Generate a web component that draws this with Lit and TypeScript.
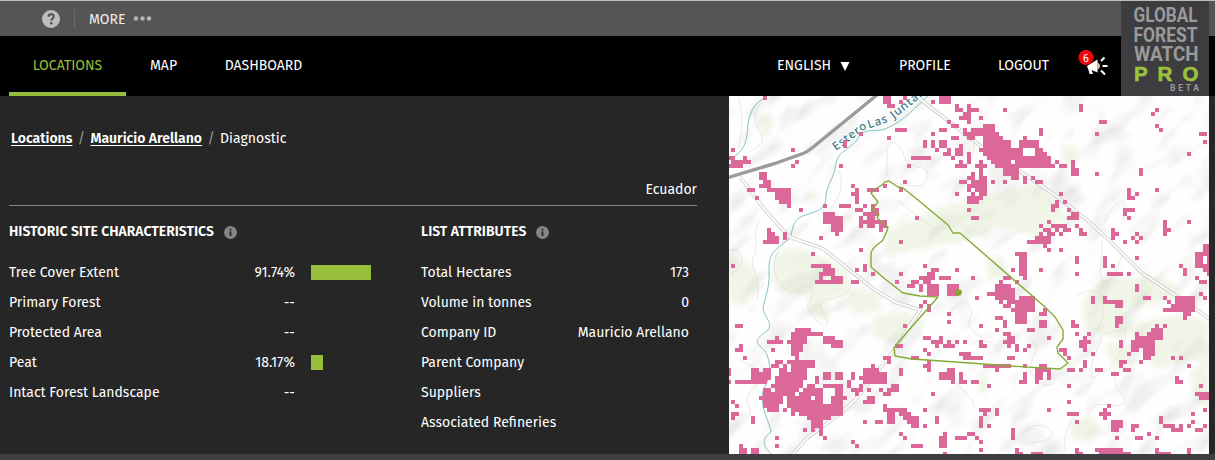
import { LitElement, html, css } from "lit";
import { customElement, property } from "lit/decorators.js";

interface Block { col: number; row: number; cells: string; }

// Loss cells: "x,y[,w[,h]]" in 4px grid units, relative to the block origin.
const BLOCKS: Block[] = [
  { col: 0, row: 0, cells: "9,0 1,13 0,15,2 4,15 1,16,5 0,17,4 16,13 17,16 16,17 28,17 29,11,1,2 33,9 39,0,2,2 40,2,2 40,10 8,19,2,2 9,21,2 8,22,3 10,23,6 12,24,4,2 13,26,3 15,27 5,23,2 7,25 18,28 24,27 31,22 32,23 31,24,2 32,25,1,2 28,27,3 35,23,3 39,22 34,27 36,27 32,28,2 36,28,2 34,29 36,29,2 35,30,2 24,29,3,3 26,30,3,4 27,34" },
  { col: 0, row: 29, cells: "10,4,1,3 9,7,4 12,6 11,5,1,2 14,5,1,2 23,6 21,10 1,13 21,13,5 24,14,3 23,15,4 23,16 26,16,3 22,17,7 33,9 34,13,1,2 32,14 36,15 31,17,2 32,-1,2 33,1,1,3 35,0,2 36,1 34,2,6 35,3,2 38,3,2 38,4 2,28,2 12,31 17,29,4 16,30,5" },
  { col: 40, row: 0, cells: "4,0 3,1 11,1 13,0,3,2 17,2 17,3,2 20,2,1,5 21,3,2 19,4 18,5,2 23,5 29,3 15,6 16,7,2 2,8,3 11,9 13,8,2 0,10 9,11,1,2 11,11,1,2 13,11,2,2 12,13 15,13,1,2 14,14 16,10,2 17,13,2,2 18,12 16,15 6,15,5 5,17 19,8 24,7,3 21,8,6 19,9,9 20,10,2 24,10,5 24,11,7,2 23,13,11 24,14,10 25,15,16 26,16,5 32,16,9 27,17,15 29,18,4,2 31,20,2 34,10 33,11,5,2 37,13,2 37,14,3 38,8,1,2 34,20,1,2 36,20 37,21,2 29,21 26,21 20,14,1,3 18,16 17,17,3 23,16,1,4 22,17,3 21,19 20,20,2 23,20,2 18,21,2 21,21,4 20,22,5 20,23 22,23,3 21,24 23,24,2 20,25,4 20,26,3 20,28 21,30,2 17,24 4,21 3,23 -1,22 7,30 41,27,1,2" },
  { col: 80, row: 0, cells: "8,2,1,2 13,6,2 12,9 26,4 27,3 27,7 28,8 38,9,2 39,11 35,14 -1,14 -1,15,2,3 1,17 2,16 3,17,2 6,16,1,4 7,18,1,2 12,19 23,18,1,2 27,23 20,23,1,3 21,25 22,24 19,28,3 19,29 20,30 3,24 4,26 2,26,1,2 1,27,1,2 5,28 6,29,2,2" },
  { col: 40, row: 29, cells: "20,-1 21,1,2 7,1 3,7 9,13 3,15 2,17 11,14,2 10,15,2 8,16,4 6,17,2 9,17,2 5,18,2 8,18,1,2 10,18,3,3 13,16,3 17,14 21,16 15,18,3,3 22,21 9,22 8,23 10,23,1,2 15,25 15,27 4,28 23,28 9,31,2 13,31 35,7,6 37,6,3 38,5 38,3 39,4 40,2 40,5 39,8 40,9 32,10,3 33,11,2,4 34,15,1,2 33,15 31,14 38,14 29,16,2 32,17 28,17 27,18,4 27,19,5 25,20,7 27,21,5 33,21,4 28,22 30,22,7 29,23,2 32,23,5 31,24,6 32,25,3,3 39,24 38,25,2 38,27,2,2 35,29,2 27,26,2 29,27,1,2 27,29 29,30,2 30,31,2" },
  { col: 80, row: 29, cells: "6,0,2,2 5,1 0,2 1,3,4 7,3 -1,4,2 2,4 4,4,2 1,5 3,5 5,4 8,5,2 8,4 -1,6,2 0,7 0,9 3,9 7,11,1,2 7,15 14,11,1,3 16,13 15,15,4 20,15 22,11 22,18,1,2 24,21,2 16,4,1,3 17,5 19,7 21,6 22,5 23,6 22,7 20,1 29,2,1,4 30,4 35,2 39,8,2 39,9,2 37,10,4 37,11,2,2 40,11,1,2 37,13,4 39,14,2 40,15 33,13 34,14,1,2 37,16 38,17,2 38,20 39,21 11,21,1,2 14,21 14,22,5 17,23,2 17,26,2,2 17,28 6,27,1,2 7,28 7,30 10,30 9,31 -1,27,1,2 29,21 30,22 32,21,5,2 31,23,6 29,24,8 34,25,2 34,26 27,28 29,28 26,29,3 25,30,4 22,31,7 22,30" },
  { col: 0, row: 59, cells: "16,0,8 12,1 16,1,4 24,1,3 10,2,4 15,2,5 24,2,5 16,3,3 26,3,3 11,4 16,4,3 16,5,2 17,6 12,7,2 15,7,7 11,8,2 14,8 16,8,6 6,9,2 9,9,2 13,9,2 16,9,4 6,10,5 13,10,7 6,11,5 12,11,8 2,12,8 12,12,7 11,13,8 20,13,2 9,14,2 12,14,6 19,14,5 9,15,8 18,15,6 8,16,6 15,16,6 22,16,2 9,17,5 15,17,9 9,18,4 15,18,14 10,19,3 14,19 16,19,13 16,20 18,20,11 20,21,6 21,22,3,2 21,24 23,24,1,2 24,26 19,24 24,13,5 27,14,2,2 26,16,3,2 24,10,2,2 27,10,2,2 22,11,1,2 31,10,1,2 30,12,1,2 33,13 31,14,3 32,15 29,16 36,8 34,9,4 34,10,6,3 33,11 39,6,2 40,7 35,14 38,14 41,13,2 40,14,3 39,15,2 35,16,2 34,17,3 43,9,1,2 42,3,2 46,6,2 49,1,2 51,2,3 53,1 54,3,3 55,2 57,2 49,4 50,5 52,3 50,7,1,3 49,8 55,9,2 53,10,4,2 56,12 58,10,1,3 59,12 58,5,3 59,6,2 59,2 51,15 39,18 39,19,6 40,20,2,3 43,20,3 44,21,4 45,22,3 46,23,2 49,19 52,21,1,2 49,23 37,22,2 34,22 43,25 44,26 46,28,3 54,25,1,4 53,26,1,3 57,26,3 60,25 54,30 31,27 32,28 12,26 12,28 2,4,2 3,3 4,6 0,9,1,2 0,12 1,17 2,18 1,20,2 1,21 6,21,1,2 3,28 3,29,2 6,29,2,2 3,30,2" },
  { col: 61, row: 59, cells: "2,2,1,2 3,3 8,0,2 9,1,2,2 8,2 9,3 11,3,1,2 14,3 13,4 19,1 0,6,3 3,8,7 9,6,2 6,9 13,8 0,12,2 4,13 13,10,1,3 12,12 16,9,3 16,10,2,2 16,12 17,8,2 19,9,1,3 26,0 29,0 28,1 27,2,2,2 28,4 29,2 30,5 22,4,2 23,5 24,6 28,7,1,2 27,9 24,9,2 31,9,2 24,13 24,17 24,20,3 26,22 19,19 37,2,1,2 39,5 41,0 44,0,4 45,-1,3 41,1,7 40,2,6,2 40,4,2 43,4,3,2 43,6,2 42,7 37,7,2 37,8 38,9,2 35,10,2 50,6 52,6 54,8 51,11,1,2 52,12 57,13 56,15,4 57,16,3 58,19 55,20 55,22 54,23 58,23 56,24,2 2,19,3 3,20 6,19,1,2 2,21,1,3 4,23 10,24,1,3 0,25 1,26 2,27 2,29 11,29 11,30,2 15,30,3 26,29 26,30,2 34,18 33,19,1,3 32,20,3 35,22,3,2 35,24,2 40,23,2 40,24 47,21,1,2 48,23,3 50,24,3 52,23 36,26 41,26,2 44,25 46,26 31,29,7 32,30,8 46,29 46,30,4 54,29,1,2" },
];

const cellPath = BLOCKS.map((b) =>
  b.cells.split(" ").map((c) => {
    const [x, y, w = 1, h = 1] = c.split(",").map(Number);
    return `M${727 + (b.col + x) * 4} ${96 + (b.row + y) * 4}h${w * 4}v${h * 4}h${-w * 4}z`;
  }).join("")
).join("");

const ROAD_A = "M740 177 L765 210 L788 236 C800 242 814 244 825 250 L852 272 L875 290 L895 302 L920 310 L892 353 L860 394 C850 407 835 418 822 427 L806 439 L792 455";
const ROAD_B = "M916 96 L982 147 L1018 170 L1055 195 L1087 220 L1112 243 L1142 273 L1178 297 L1210 319";
const SITE = "M889 181L898 187L903 188L918 200L930 210L942 220L948 225L953 233L960 233L1045 307L1055 317L1063 330L1063 339L1057 347L1058 353L1068 363L1060 369L1010 366L970 363L912 359L895 356L894 348L902 338L938 297L920 296L903 293L885 279L871 267L871 253C873 246 879 244 883 240L887 231L888 227L877 218L879 214L872 210L878 202L871 193L877 188L882 185L885 182Z";

@customElement("forest-map")
class ForestMap extends LitElement {
  static styles = css`
    :host { display: block; background: #fefefe; overflow: hidden; }
    svg { display: block; }
    .water { fill: none; stroke: #86c2c0; stroke-width: 1; }
    .contour { fill: none; stroke: #d9cfc6; stroke-width: 0.8; opacity: 0.6; }
    .case { fill: none; stroke: #cacac8; stroke-width: 3.6; }
    .road { fill: none; stroke: #fcfcfc; stroke-width: 2.1; }
    .highway { fill: none; stroke: #9b9b9b; stroke-width: 3.4; }
    .veg { fill: #f1f5e7; }
    .cells { fill: #dc6899; shape-rendering: crispEdges; }
    .site { fill: none; stroke: #84ab36; stroke-width: 1.4; stroke-linejoin: round; }
    .pin { fill: #7fa82d; }
    .label { font: 500 11.5px "Noto Sans", sans-serif; fill: #3c7884; letter-spacing: 0.9px; stroke: #fff; stroke-width: 2px; paint-order: stroke; }
  `;
  render() {
    return html`<svg width="480" height="358" viewBox="729 96 480 358">
      <defs>
        <filter id="relief" x="0" y="0" width="1" height="1" color-interpolation-filters="sRGB">
          <feTurbulence type="fractalNoise" baseFrequency="0.027 0.055" numOctaves="2" seed="11"></feTurbulence>
          <feColorMatrix values="0 0 0 0 .5  0 0 0 0 .5  0 0 0 0 .49  .45 0 0 0 -.222"></feColorMatrix>
        </filter>
        <filter id="soft"><feGaussianBlur stdDeviation="2.5"></feGaussianBlur></filter>
      </defs>
      <g class="veg" filter="url(#soft)">
        <path d="M757 120l8-7 9 6-4 15-6 5z M806 190l8-1 3 8-7 6-4-3z"></path>
        <path d="M729 258h12l14 10 2 20-10 16-18-1z"></path>
        <path d="M787 247l22 5 28 12 13 12-2 18-22 6 4 22-18-6-6-20-26-4-10-14 4-20z"></path>
        <path d="M850 290l28 0 3 22-30 2z M872 318l30-8 20 12-22 22-26-6z"></path>
        <path d="M885 232l52-24 60-14 40-14 20 24 8 14-28 18-38-8-40 14-44 8-30 8z"></path>
        <path d="M985 260l16-4 8 16-20 10z M1060 145l18 2-2 16-10 6z"></path>
        <path d="M1100 280l60-4 22 14-8 12-50 6 12 22-16 10-34-10-4-28z M1128 325l50-10 31 6v40l-24 0-30 8z"></path>
        <path d="M1072 420l20-4 10 16-14 12-18-8z M1190 370l19-10v50l-15-10z M1105 345l24-3 6 20-20 8z M980 375l8 0-2 20-8-4z"></path>
      </g>
      <g transform="rotate(-42 969 275)"><rect x="649" y="-35" width="640" height="620" filter="url(#relief)"></rect></g>
      <g class="contour">
        <path d="M739 98c4 20 3 30 0 50 M765 98c-12 14-12 20-5 34s-2 12-10 20 M839 170c8 26-6 30-18 56 M795 228c-20 20-26 40-16 54s18 10 24 4c12-4 12 12 4 20 10 22 24 24 20 14-6-12-12-20 2-21 16-2 24-8 22-20"></path>
        <path d="M887 148c4-10 12-5 16 4 2 12 8 14 20 16 10 4 4 20-10 18s-28-2-26-18z M950 315c6-18 20-16 22-2-6 12-2 18 10 24 M1105 222c6-14 16-26 20-18l-2 18 M1102 240c0 30-6 42 6 41 10-6 10-18 16-30 M1078 295c10-6 22-6 24 2 4 22-4 36-14 44"></path>
        <path d="M730 250c16-4 16 20 0 23 M760 220c-10 16 0 26-6 36s8 20 3 44 M740 360c20 10 30 14 12 30-12 12 4 16-4 28 M1115 375c-2 20 12 18 10 28-12 8-30-8-36 12 M1065 450c-2-16 4-26 12-38 M1026 432c6-12 26-6 26 2s-20 8-22 10 M1092 378c-4-20 8-26 10-44l22-4c6 8-8 30-14 38z M1030 370c6 16 24 20 26 8"></path>
        <path d="M898 200c10 10 22 18 34 26 M968 130c10 6 8 30-6 42 M953 365c2 26 18 28 22 42 M1030 340c16 10-6 20 4 30 M970 345c10-8 26-4 30 8"></path>
      </g>
      <g class="water">
        <path d="M766 97C754 103 750 112 748 124C747 140 746 148 734 157"></path>
        <path d="M928 96C914 108 906 120 885 129C874 133 864 126 857 140C848 150 838 152 836 163C834 180 826 185 826 197C826 211 815 211 806 215C788 220 795 234 788 240C770 252 769 257 769 272C770 290 764 298 763 309C765 318 774 324 767 331C752 341 757 343 765 351C771 362 772 374 763 391C759 405 770 423 771 432C760 440 764 447 771 454"></path>
      </g>
      <path class="case" d=${ROAD_A}></path><path class="case" d=${ROAD_B}></path>
      <path class="road" d=${ROAD_A}></path><path class="road" d=${ROAD_B}></path>
      <path class="highway" d="M728 177.500L775 163.500L803 153.500Q807 152 812 148L877 95"></path>
      <g class="label">
        <text transform="translate(836 151) rotate(-37)">Estero</text>
        <text transform="translate(869 128.500) rotate(-19)">Las</text>
        <text transform="translate(894 119) rotate(-39)">Juntas</text>
      </g>
      <path class="cells" d=${cellPath}></path>
      <path class="site" d=${SITE}></path>
      <circle class="pin" cx="958.500" cy="292.500" r="3.300"></circle>
    </svg>`;
  }
}

const infoIcon = html`<svg width="13" height="13" viewBox="0 0 13 13">
  <circle cx="6.500" cy="6.500" r="6.500" fill="#858585"></circle>
  <path d="M5.600 2.800h1.800v1.700H5.600zM5.200 5.500h2.200V10H5.600V6.500h-.4z" fill="#262626"></path></svg>`;

@customElement("stat-row")
class StatRow extends LitElement {
  @property() label = "";
  @property() value = "";
  @property({ type: Number }) bar = 0;
  static styles = css`
    :host { display: flex; height: 30px; align-items: center; }
    .text { padding-top: 2px; }
    .name { flex: 1; }
    .bar { height: 15px; background: #98bf3c; }
    .track { width: 60px; margin-left: 16px; }
    :host(.plain) .track { display: none; }
  `;
  render() {
    return html`<span class="text name">${this.label}</span><span class="text">${this.value}</span>
      <span class="track">${this.bar ? html`<div class="bar" style="width:${this.bar}px"></div>` : ""}</span>`;
  }
}

@customElement("app-root")
class AppRoot extends LitElement {
  static styles = css`
    :host {
      display: flex; flex-direction: column; box-sizing: border-box; position: relative;
      width: 1215px; height: 460px; overflow: hidden; background: #3e3e40; border-top: 1px solid #b9bdbb;
      font: 14px/20px "Fira Sans", "Noto Sans", sans-serif; font-stretch: 90%; color: #fff;
    }
    svg { display: block; }
    .top { height: 35px; background: #555; display: flex; align-items: center; padding-left: 42px; }
    .sep { width: 1px; height: 18px; background: #6b6b6b; margin: 0 14px 0 14px; }
    .more { color: #eee; padding-top: 2px; }
    .dots { margin-left: 8px; }
    .nav { height: 60px; background: #000; display: flex; padding-left: 9px; }
    .tab { display: flex; align-items: center; justify-content: center; box-sizing: border-box; }
    .locations { width: 117px; color: #97bd3d; border-bottom: 4px solid #97bd3d; padding: 4px 0 0; }
    .map { width: 75px; }
    .dash { width: 125px; }
    .right { display: flex; align-items: center; margin-left: 451px; }
    .lang { width: 122px; display: flex; align-items: center; gap: 9px; }
    .profile { width: 99px; }
    .logout { width: 79px; }
    .bell { margin: -4px 0 0; }
    .logo { position: absolute; left: 1121px; top: 0; }
    .main { display: flex; height: 358px; background: #262626; }
    .panel { width: 688px; padding: 33px 32px 0 9px; }
    .crumbs { display: flex; padding-left: 2px; }
    .crumbs a { font-weight: 600; text-decoration: underline; text-underline-offset: 2px; }
    .slash { color: #999; width: 18px; text-align: center; }
    .country { margin-top: 31px; height: 25px; border-bottom: 1px solid #858585; text-align: right; }
    .cols { display: flex; gap: 50px; margin-top: 16px; }
    .left { width: 362px; }
    .attrs { width: 268px; }
    h2 { margin: 0 0 15px; font-size: 14px; line-height: 20px; font-weight: 600; display: flex; align-items: center; gap: 10px; }
    h2 svg { margin-top: 1px; }
    forest-map { width: 480px; }
  `;
  render() {
    const stats: [string, string, number][] = [
      ["Tree Cover Extent", "91.74%", 60], ["Primary Forest", "--", 0], ["Protected Area", "--", 0],
      ["Peat", "18.17%", 12], ["Intact Forest Landscape", "--", 0]];
    const attrs = [["Total Hectares", "173"], ["Volume in tonnes", "0"], ["Company ID", "Mauricio Arellano"],
      ["Parent Company", ""], ["Suppliers", ""], ["Associated Refineries", ""]];
    return html`
      <div class="top">
        <svg width="18" height="18" viewBox="0 0 18 18"><circle cx="9" cy="9" r="9" fill="#bdbdbd"></circle>
          <path d="M6.400 6.800C6.500 5 7.600 4.200 9.100 4.200S11.700 5 11.700 6.500C11.700 8.500 9.300 8.600 9.300 10.800" fill="none" stroke="#505050" stroke-width="1.900"></path><circle cx="9.300" cy="13.300" r="1.200" fill="#505050"></circle></svg>
        <span class="sep"></span><span class="more">MORE</span>
        <svg class="dots" width="19" height="6" viewBox="0 0 19 6" fill="#b5b5b5"><circle cx="3" cy="2.500" r="2.200"></circle><circle cx="9.500" cy="2.500" r="2.200"></circle><circle cx="16" cy="2.500" r="2.200"></circle></svg>
      </div>
      <div class="nav">
        <span class="tab locations">LOCATIONS</span><span class="tab map">MAP</span><span class="tab dash">DASHBOARD</span>
        <div class="right">
          <span class="lang">ENGLISH <svg width="10" height="9" viewBox="0 0 10 9"><path d="M0.500 0h9L5 9z" fill="#fff"></path></svg></span>
          <span class="profile">PROFILE</span><span class="logout">LOGOUT</span>
          <svg class="bell" width="34" height="28" viewBox="0 0 34 28">
            <path d="M10 16L20.500 9.500v13l-6-2.500 1.500 4h-3.500l-1-4z" fill="#fff"></path>
            <path d="M20.500 12q5 4 0 8z" fill="#e5d3a4"></path>
            <path d="M24 11l3.500-3.500M25.500 16h5M24 20.500l4 4" stroke="#fff" stroke-width="2"></path>
            <circle cx="9" cy="7.500" r="7.600" fill="#f0040b"></circle>
            <text x="9" y="11.500" text-anchor="middle" font-size="11" fill="#fff">6</text></svg>
        </div>
      </div>
      <svg class="logo" width="88" height="95" viewBox="0 1 88 95" font-family="Roboto, sans-serif" fill="#9a9a9c">
        <rect y="1" width="88" height="95" fill="#3d3d3f"></rect>
        <g font-size="21" font-weight="700">
        <text x="12.500" y="22" textLength="64" lengthAdjust="spacingAndGlyphs">GLOBAL</text>
        <text x="12.500" y="41.500" textLength="64" lengthAdjust="spacingAndGlyphs">FOREST</text>
        <text x="13" y="61" textLength="64.500" lengthAdjust="spacingAndGlyphs">WATCH</text></g>
        <g font-size="20.500" font-weight="700" fill="#9bc23d" stroke="#9bc23d" stroke-width="0.600" font-family="Liberation Sans, sans-serif">
        <text x="13" y="80.500">P</text><text x="36.500" y="80.500">R</text><text x="61.500" y="80.500">O</text></g>
        <text x="49" y="91" font-size="8.500" font-weight="700" textLength="29" lengthAdjust="spacing">BETA</text>
      </svg>
      <div class="main">
        <div class="panel">
          <div class="crumbs"><a>Locations</a><span class="slash">/</span><a>Mauricio Arellano</a><span class="slash">/</span><span>Diagnostic</span></div>
          <div class="country">Ecuador</div>
          <div class="cols">
            <div class="left"><h2>HISTORIC SITE CHARACTERISTICS ${infoIcon}</h2>
              ${stats.map(([l, v, b]) => html`<stat-row label=${l} value=${v} bar=${b}></stat-row>`)}</div>
            <div class="attrs"><h2>LIST ATTRIBUTES ${infoIcon}</h2>
              ${attrs.map(([l, v]) => html`<stat-row class="plain" label=${l} value=${v}></stat-row>`)}</div>
          </div>
        </div>
        <forest-map></forest-map>
      </div>`;
  }
}
